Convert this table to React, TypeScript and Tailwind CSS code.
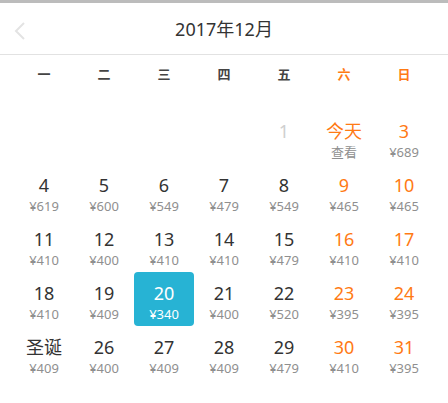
import React from "react";

type Cell = { n?: string; p?: string; weekend?: boolean; disabled?: boolean; today?: boolean; selected?: boolean } | null;

const weeks: Cell[][] = [
  [null, null, null, null, { n: "1", disabled: true }, { n: "今天", p: "查看", today: true, weekend: true }, { n: "3", p: "¥689", weekend: true }],
  [{ n: "4", p: "¥619" }, { n: "5", p: "¥600" }, { n: "6", p: "¥549" }, { n: "7", p: "¥479" }, { n: "8", p: "¥549" }, { n: "9", p: "¥465", weekend: true }, { n: "10", p: "¥465", weekend: true }],
  [{ n: "11", p: "¥410" }, { n: "12", p: "¥400" }, { n: "13", p: "¥410" }, { n: "14", p: "¥410" }, { n: "15", p: "¥479" }, { n: "16", p: "¥410", weekend: true }, { n: "17", p: "¥410", weekend: true }],
  [{ n: "18", p: "¥410" }, { n: "19", p: "¥409" }, { n: "20", p: "¥340", selected: true }, { n: "21", p: "¥400" }, { n: "22", p: "¥520" }, { n: "23", p: "¥395", weekend: true }, { n: "24", p: "¥395", weekend: true }],
  [{ n: "圣诞", p: "¥409" }, { n: "26", p: "¥400" }, { n: "27", p: "¥409" }, { n: "28", p: "¥409" }, { n: "29", p: "¥479" }, { n: "30", p: "¥410", weekend: true }, { n: "31", p: "¥395", weekend: true }],
];

const days = ["一", "二", "三", "四", "五", "六", "日"];

export default function App() {
  return (
    <div
      className="w-[448px] h-[403px] bg-white overflow-hidden"
      style={{ fontFamily: '"Noto Sans", "Noto Sans CJK SC", sans-serif' }}
    >
      <div className="h-[3px] bg-[#bcbcbc]" />
      <div className="relative h-[52px] flex items-center justify-center border-b border-[#e2e2e2]">
        <svg className="absolute left-[14px] top-[19px]" width="12" height="18" viewBox="0 0 12 18">
          <path d="M10 1 L2 9 L10 17" fill="none" stroke="#e3e3e3" strokeWidth="2" />
        </svg>
        <span className="text-[18px] text-[#333] leading-none">2017年12月</span>
      </div>
      <div className="grid grid-cols-7 px-[14px] h-[40px] items-center">
        {days.map((d, i) => (
          <div
            key={d}
            className={`text-center text-[13px] font-semibold ${i >= 5 ? "text-[#ff7a14]" : "text-[#444]"}`}
          >
            {d}
          </div>
        ))}
      </div>
      <div className="mt-[15px] px-[14px] flex flex-col">
        {weeks.map((w, wi) => (
          <div key={wi} className="grid grid-cols-7 h-[54px]">
            {w.map((c, ci) => {
              if (!c) return <div key={ci} />;
              const numColor = c.selected
                ? "text-white"
                : c.disabled
                ? "text-[#cfcfcf]"
                : c.weekend
                ? "text-[#ff7a14]"
                : "text-[#333]";
              const priceColor = c.selected ? "text-white" : "text-[#8f8f8f]";
              return (
                <div
                  key={ci}
                  className={`flex flex-col items-center pt-[9px] rounded-[4px] ${c.selected ? "bg-[#27b3d4]" : ""}`}
                >
                  <div className={`text-[18px] leading-[24px] ${numColor}`}>{c.n}</div>
                  {c.p && <div className={`text-[13px] leading-[18px] ${priceColor}`}>{c.p}</div>}
                </div>
              );
            })}
          </div>
        ))}
      </div>
    </div>
  );
}
